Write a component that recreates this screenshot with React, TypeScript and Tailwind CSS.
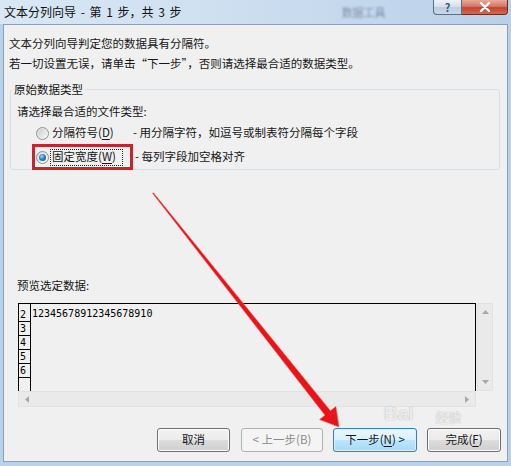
import React from "react";

function Radio({ checked }: { checked?: boolean }) {
  return (
    <div className="w-[13px] h-[13px] rounded-full border border-[#8f9192] bg-gradient-to-br from-[#dcdcdc] to-[#fbfbfb] flex items-center justify-center shrink-0">
      {checked ? (
        <div className="w-[7px] h-[7px] rounded-full bg-[radial-gradient(circle_at_40%_35%,#a9d4f5_0%,#2f7fc8_45%,#0f4f94_100%)]" />
      ) : (
        <div className="w-[9px] h-[9px] rounded-full bg-gradient-to-br from-[#cfcfcf] to-[#f6f6f6]" />
      )}
    </div>
  );
}

function Btn({
  children,
  w,
  kind,
}: {
  children: React.ReactNode;
  w: string;
  kind?: "disabled" | "default";
}) {
  if (kind === "disabled") {
    return (
      <div className={`${w} h-[24px] rounded-[3px] border border-[#adb2b5] bg-[#f4f4f4] text-[#8a8a8a] flex items-center justify-center`}>
        {children}
      </div>
    );
  }
  if (kind === "default") {
    return (
      <div className={`${w} h-[24px] rounded-[3px] border border-[#3c7fb1] bg-[linear-gradient(#eaf6fd_0%,#d9f0fc_50%,#bee6fd_50%,#a7d9f5_100%)] shadow-[inset_0_0_0_1px_#d8effc] flex items-center justify-center`}>
        {children}
      </div>
    );
  }
  return (
    <div className={`${w} h-[24px] rounded-[3px] border border-[#707070] bg-[linear-gradient(#f2f2f2_0%,#ebebeb_50%,#dddddd_50%,#cfcfcf_100%)] shadow-[inset_0_0_0_1px_#fcfcfc] flex items-center justify-center`}>
      {children}
    </div>
  );
}

export default function App() {
  const rows = ["3", "4", "5", "6"];
  return (
    <div className="relative w-[511px] h-[466px] overflow-hidden bg-[#bad1ea] font-['Noto_Sans_CJK_SC','Noto_Sans',sans-serif] text-[11.5px] text-[#161616]">
      {/* title bar */}
      <div className="h-[24px] flex items-start bg-[linear-gradient(90deg,#d9e7f5_0%,#cfe0f1_40%,#c4d8ed_70%,#b9d0e9_100%)]">
        <div className="pl-[4px] h-[24px] flex items-center text-[12px] text-[#101010] [word-spacing:2px]">
          文本分列向导 - 第 1 步，共 3 步
        </div>
        <div className="ml-[160px] h-[24px] flex items-center text-[11px] text-[#7d90a8] blur-[1px]">
          数据工具
        </div>
        <div className="ml-auto mr-[3px] flex">
          <div className="w-[29px] h-[15px] rounded-bl-[4px] border border-t-0 border-[#5b6f86] bg-[linear-gradient(#eef3f9_0%,#d2dfec_50%,#bccde0_50%,#c9d8e8_100%)] flex items-center justify-center text-[11px] font-bold leading-none text-[#41566f]">
            ?
          </div>
          <div className="w-[46px] h-[15px] rounded-br-[4px] border border-l-0 border-t-0 border-[#6e2a22] bg-[linear-gradient(#e9a99c_0%,#d47766_45%,#c0452f_55%,#d26a52_100%)] flex items-center justify-center">
            <svg width="12" height="10" viewBox="0 0 12 10">
              <path d="M2 1 L10 9 M10 1 L2 9" stroke="#fff" strokeWidth="2.4" strokeLinecap="round" />
            </svg>
          </div>
        </div>
      </div>

      {/* main panel */}
      <div className="mx-[3px] h-[438px] bg-[#f0f0f0] border border-[#8aa0b8] flex flex-col">
        <div className="mt-[8px] pl-[5px] h-[20px] leading-[20px]">
          文本分列向导判定您的数据具有分隔符。
        </div>
        <div className="pl-[5px] h-[20px] leading-[20px]">
          若一切设置无误，请单击“下一步”，否则请选择最合适的数据类型。
        </div>

        <fieldset className="mt-[8px] ml-[6px] mr-[7px] p-0 min-w-0 border border-[#d5dfe5] rounded-[3px]">
          <legend className="ml-[1px] px-[2px] h-[16px] leading-[16px]">原始数据类型</legend>
          <div className="pl-[6px]">
            <div className="mt-[6px] h-[16px] leading-[16px]">请选择最合适的文件类型:</div>
            <div className="mt-[2px] pl-[19px] h-[24px] flex items-center">
              <Radio />
              <div className="ml-[1px] w-[73px] h-[17px] border border-transparent px-[1px] flex items-center whitespace-nowrap">
                分隔符号(<span className="underline underline-offset-2">D</span>)
              </div>
              <div className="ml-[10px] whitespace-nowrap">- 用分隔字符，如逗号或制表符分隔每个字段</div>
            </div>
            <div className="relative pl-[19px] h-[24px] flex items-center">
              <Radio checked />
              <div className="ml-[1px] w-[73px] h-[17px] border border-dotted border-[#222] px-[1px] flex items-center whitespace-nowrap">
                固定宽度(<span className="underline underline-offset-2">W</span>)
              </div>
              <div className="ml-[12px] whitespace-nowrap">- 每列字段加空格对齐</div>
              <div className="absolute left-[15px] top-[-1px] w-[101px] h-[26px] border-[3px] border-[#c8242b]" />
            </div>
          </div>
        </fieldset>

        <div className="mt-[107px] ml-[13px] h-[16px] leading-[16px]">预览选定数据:</div>

        <div className="mt-[10px] ml-[14px] flex">
          <div className="w-[458px] flex flex-col">
            <div className="h-[88px] border-l border-t border-r border-black flex overflow-hidden font-['DejaVu_Sans_Mono',monospace] text-[10px] text-black">
              <div className="w-[12px] border-r border-black flex flex-col shrink-0">
                <div className="h-[20px] border-b border-black flex items-end pl-[1px] leading-[13px]">2</div>
                {rows.map((r) => (
                  <div key={r} className="h-[15px] border-b border-black flex items-end pl-[1px] leading-[13px]">
                    {r}
                  </div>
                ))}
                <div className="h-[15px]" />
              </div>
              <div className="pl-[1px] pt-[3px] leading-[14px]">12345678912345678910</div>
            </div>
            <div className="h-[16px] bg-[#eaeaea] border border-[#e2e2e2] flex items-center justify-between px-[6px]">
              <svg width="4" height="7" viewBox="0 0 4 7">
                <path d="M4 0 L0 3.5 L4 7 Z" fill="#a8a8a8" />
              </svg>
              <svg width="4" height="7" viewBox="0 0 4 7">
                <path d="M0 0 L4 3.5 L0 7 Z" fill="#a8a8a8" />
              </svg>
            </div>
          </div>
          <div className="ml-[1px] w-[16px] h-[88px] bg-[#eaeaea] border border-[#e2e2e2] flex flex-col items-center justify-between py-[6px]">
            <svg width="7" height="4" viewBox="0 0 7 4">
              <path d="M0 4 L3.5 0 L7 4 Z" fill="#a8a8a8" />
            </svg>
            <svg width="7" height="4" viewBox="0 0 7 4">
              <path d="M0 0 L3.5 4 L7 0 Z" fill="#a8a8a8" />
            </svg>
          </div>
        </div>

        <div className="mt-auto mb-[9px] pr-[6px] flex justify-end">
          <Btn w="w-[73px]">取消</Btn>
          <div className="ml-[11px]">
            <Btn w="w-[82px]" kind="disabled">&lt; 上一步(B)</Btn>
          </div>
          <div className="ml-[10px]">
            <Btn w="w-[84px]" kind="default">
              下一步(<span className="underline underline-offset-2">N</span>) &gt;
            </Btn>
          </div>
          <div className="ml-[10px]">
            <Btn w="w-[74px]">
              完成(<span className="underline underline-offset-2">F</span>)
            </Btn>
          </div>
        </div>
      </div>

      {/* watermark */}
      <div className="absolute left-[384px] top-[404px] pointer-events-none flex items-end leading-none text-white/80 [text-shadow:0_0_1px_rgba(110,110,110,0.7)]">
        <span className="text-[19px] font-bold font-['Liberation_Sans',sans-serif]">Bai</span>
        <span className="ml-[22px] text-[13px]">经验</span>
      </div>

      {/* red arrow annotation */}
      <svg className="absolute left-0 top-0 pointer-events-none" width="511" height="466" viewBox="0 0 511 466">
        <polygon
          points="152.6,193.3 325.0,415.2 319.5,419.6 339,427 335.9,406.4 330.4,410.8 153.4,192.7"
          fill="#e8141a"
          stroke="#f25a5a"
          strokeWidth="0.6"
          strokeLinejoin="round"
        />
      </svg>
    </div>
  );
}
